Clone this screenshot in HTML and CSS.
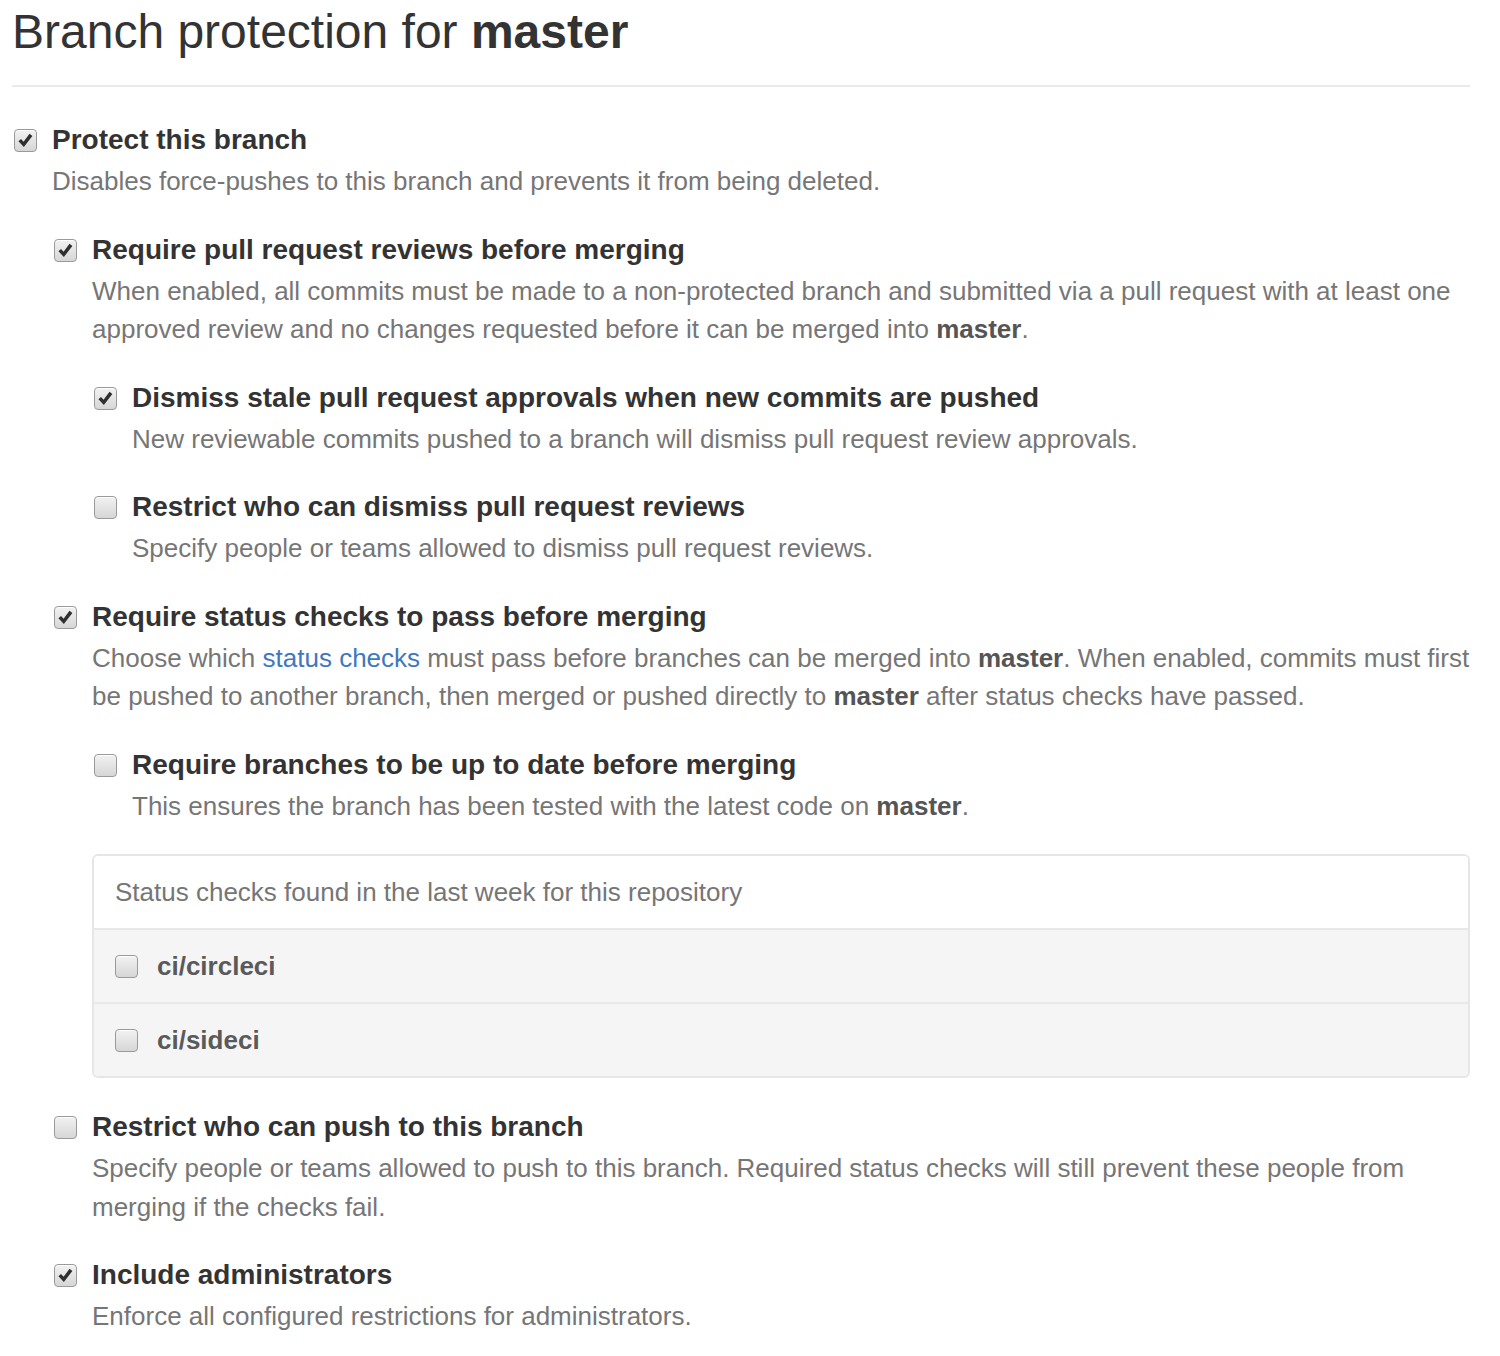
FILE: index.html
```html
<!DOCTYPE html>
<html lang="en">
<head>
<meta charset="utf-8">
<title>Branch protection for master</title>
<link rel="stylesheet" href="styles.css">
</head>
<body>
<div class="page">
  <h2 class="subhead">Branch protection for <strong>master</strong></h2>

  <div class="item">
    <span class="cb checked"><svg viewBox="0 0 22 22"><path d="M3.6 11.8 L6.3 9.4 L9 12.3 L15.2 4 L18.2 6.2 L9.3 17.8 Z"/></svg></span>
    <div class="body">
      <div class="label">Protect this branch</div>
      <p class="note">Disables force-pushes to this branch and prevents it from being deleted.</p>

      <div class="item">
        <span class="cb checked"><svg viewBox="0 0 22 22"><path d="M3.6 11.8 L6.3 9.4 L9 12.3 L15.2 4 L18.2 6.2 L9.3 17.8 Z"/></svg></span>
        <div class="body">
          <div class="label">Require pull request reviews before merging</div>
          <p class="note">When enabled, all commits must be made to a non-protected branch and submitted via a pull request with at least one approved review and no changes requested before it can be merged into <strong>master</strong>.</p>

          <div class="item">
            <span class="cb checked"><svg viewBox="0 0 22 22"><path d="M3.6 11.8 L6.3 9.4 L9 12.3 L15.2 4 L18.2 6.2 L9.3 17.8 Z"/></svg></span>
            <div class="body">
              <div class="label">Dismiss stale pull request approvals when new commits are pushed</div>
              <p class="note">New reviewable commits pushed to a branch will dismiss pull request review approvals.</p>
            </div>
          </div>

          <div class="item">
            <span class="cb"></span>
            <div class="body">
              <div class="label">Restrict who can dismiss pull request reviews</div>
              <p class="note">Specify people or teams allowed to dismiss pull request reviews.</p>
            </div>
          </div>
        </div>
      </div>

      <div class="item">
        <span class="cb checked"><svg viewBox="0 0 22 22"><path d="M3.6 11.8 L6.3 9.4 L9 12.3 L15.2 4 L18.2 6.2 L9.3 17.8 Z"/></svg></span>
        <div class="body">
          <div class="label">Require status checks to pass before merging</div>
          <p class="note">Choose which <a href="#" class="link">status checks</a> must pass before branches can be merged into <strong>master</strong>. When enabled, commits must first be pushed to another branch, then merged or pushed directly to <strong>master</strong> after status checks have passed.</p>

          <div class="item">
            <span class="cb"></span>
            <div class="body">
              <div class="label">Require branches to be up to date before merging</div>
              <p class="note">This ensures the branch has been tested with the latest code on <strong>master</strong>.</p>
            </div>
          </div>

          <div class="checks-box">
            <div class="checks-head">Status checks found in the last week for this repository</div>
            <div class="checks-row"><span class="cb"></span><span class="check-name">ci/circleci</span></div>
            <div class="checks-row"><span class="cb"></span><span class="check-name">ci/sideci</span></div>
          </div>
        </div>
      </div>

      <div class="item">
        <span class="cb"></span>
        <div class="body">
          <div class="label">Restrict who can push to this branch</div>
          <p class="note">Specify people or teams allowed to push to this branch. Required status checks will still prevent these people from merging if the checks fail.</p>
        </div>
      </div>

      <div class="item">
        <span class="cb checked"><svg viewBox="0 0 22 22"><path d="M3.6 11.8 L6.3 9.4 L9 12.3 L15.2 4 L18.2 6.2 L9.3 17.8 Z"/></svg></span>
        <div class="body">
          <div class="label">Include administrators</div>
          <p class="note">Enforce all configured restrictions for administrators.</p>
        </div>
      </div>
    </div>
  </div>
</div>
</body>
</html>
```

FILE: styles.css
```css
html, body {
  margin: 0;
  padding: 0;
  background: #fff;
}

body {
  font-family: "Liberation Sans", Arial, sans-serif;
  color: #333;
}

.page {
  width: 1458px;
  margin-left: 12px;
}

.subhead {
  margin: 0;
  padding-top: 2px;
  padding-bottom: 23px;
  font-size: 48px;
  line-height: 60px;
  font-weight: normal;
  color: #333;
  border-bottom: 2px solid #eaeaea;
}

.subhead strong {
  font-weight: bold;
}

.page > .item {
  margin-top: 33px;
}

.item {
  display: grid;
  grid-template-columns: 40px 1fr;
}

.item .item {
  margin-top: 29px;
}

.cb {
  box-sizing: border-box;
  width: 23px;
  height: 23px;
  margin-left: 2px;
  margin-top: 9px;
  border: 1px solid #9a9a9a;
  border-radius: 4px;
  background: linear-gradient(#f2f2f2, #d6d6d6);
  box-shadow: inset 0 1px 0 #fff;
  display: flex;
  align-items: center;
  justify-content: center;
}

.cb svg {
  width: 21px;
  height: 21px;
  fill: #2f2f2f;
}

.label {
  font-size: 28px;
  line-height: 40px;
  font-weight: bold;
  color: #333;
}

.note {
  margin: 2px 0 0;
  font-size: 26px;
  line-height: 38.5px;
  color: #767676;
}

.note strong {
  color: #555;
  font-weight: bold;
}

.link {
  color: #4078c0;
  text-decoration: none;
}

.checks-box {
  margin-top: 29px;
  border: 2px solid #e6e6e6;
  border-radius: 6px;
  overflow: hidden;
}

.checks-head {
  height: 72px;
  box-sizing: border-box;
  padding-left: 21px;
  display: flex;
  align-items: center;
  font-size: 26px;
  color: #767676;
  background: #fff;
}

.checks-row {
  height: 74px;
  box-sizing: border-box;
  border-top: 2px solid #e8e8e8;
  background: #f5f5f5;
  padding-left: 21px;
  display: flex;
  align-items: center;
  gap: 19px;
}

.checks-row .cb {
  margin: 0;
}

.check-name {
  font-size: 26px;
  font-weight: bold;
  color: #5a5a5a;
}
```
